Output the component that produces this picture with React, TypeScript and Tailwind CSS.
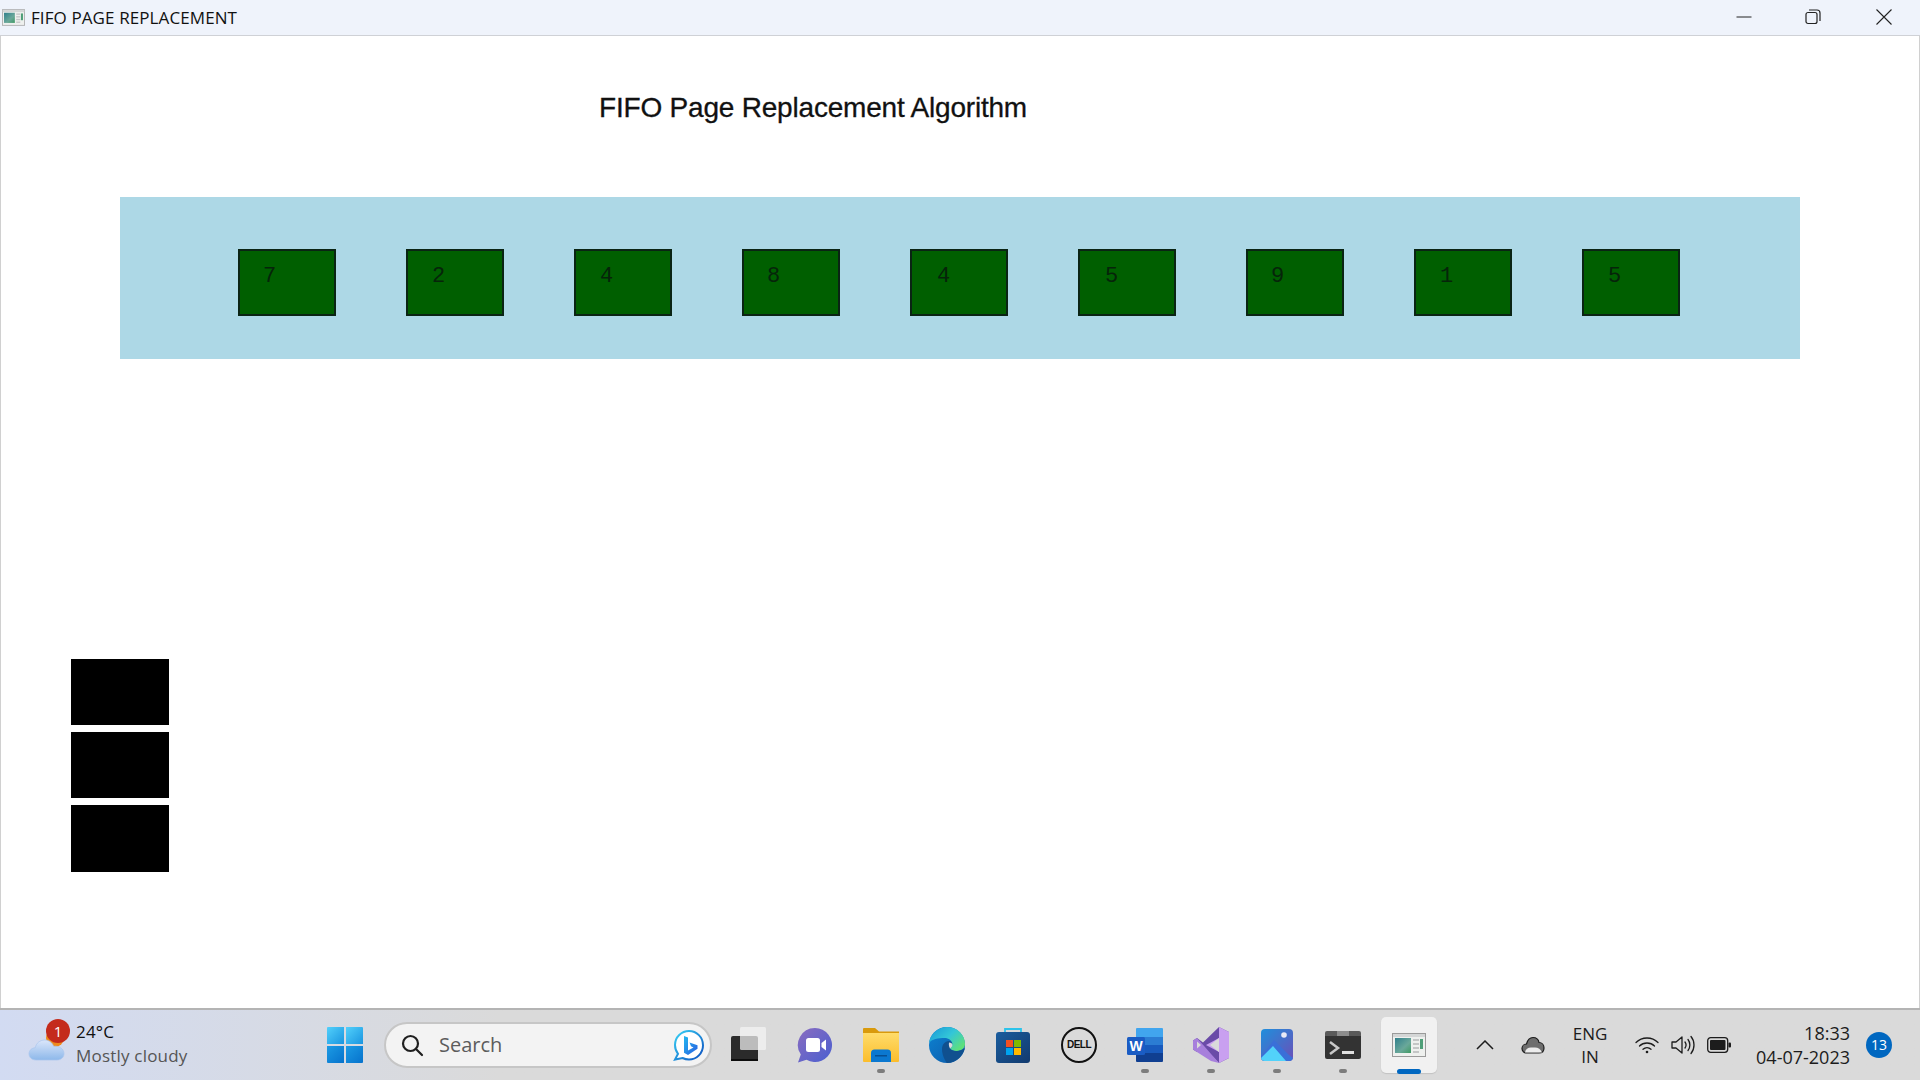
const pages = [
  { value: "7", pad: "pl-[23px]" },
  { value: "2", pad: "pl-[24px]" },
  { value: "4", pad: "pl-[24px]" },
  { value: "8", pad: "pl-[23px]" },
  { value: "4", pad: "pl-[25px]" },
  { value: "5", pad: "pl-[25px]" },
  { value: "9", pad: "pl-[23px]" },
  { value: "1", pad: "pl-[24px]" },
  { value: "5", pad: "pl-[24px]" },
];

function AppIcon({ className }: { className?: string }) {
  return (
    <svg viewBox="0 0 34 24" className={className}>
      <rect x="0.5" y="0.5" width="33" height="23" fill="#eef0ee" stroke="#9a9a9a" />
      <rect x="1" y="1" width="32" height="3" fill="#d4d6d6" />
      <defs>
        <linearGradient id="appFill" x1="0" y1="0" x2="1" y2="1">
          <stop offset="0" stopColor="#2f7f8c" />
          <stop offset="0.6" stopColor="#6aa89a" />
          <stop offset="1" stopColor="#3f9a63" />
        </linearGradient>
      </defs>
      <rect x="3" y="5" width="16" height="15" fill="url(#appFill)" />
      <rect x="21" y="6" width="6" height="2" fill="#c4c6c6" />
      <rect x="21" y="10" width="6" height="2" fill="#c4c6c6" />
      <rect x="21" y="14" width="6" height="2" fill="#c4c6c6" />
      <rect x="21" y="18" width="6" height="2" fill="#c4c6c6" />
      <rect x="28" y="6" width="3" height="10" fill="#4f9f78" />
    </svg>
  );
}

function WeatherIcon() {
  return (
    <svg viewBox="0 0 38 36" className="h-[36px] w-[38px]">
      <defs>
        <linearGradient id="cloudFill" x1="0" y1="0" x2="0" y2="1">
          <stop offset="0" stopColor="#dbe6fa" />
          <stop offset="1" stopColor="#8db8ea" />
        </linearGradient>
      </defs>
      <circle cx="27" cy="11" r="9" fill="#ee8a1c" />
      <path
        d="M8 33c-4 0-7-2.600-7-6.200 0-3.400 2.800-6 6.300-6 .6-4.400 4.700-7.800 9.300-7.800 4.300 0 7.800 2.600 9 6.300 5.200-.6 10.400 2.200 10.400 7.400 0 3.800-3.200 6.300-7 6.300z"
        fill="url(#cloudFill)"
        stroke="#a9c6ee"
        strokeWidth="0.7"
      />
    </svg>
  );
}

function WinLogo() {
  return (
    <svg viewBox="0 0 36 36" className="h-[36px] w-[36px]">
      <defs>
        <linearGradient id="winA" x1="0" y1="0" x2="1" y2="1">
          <stop offset="0" stopColor="#52d0fb" />
          <stop offset="1" stopColor="#1a95e0" />
        </linearGradient>
        <linearGradient id="winB" x1="0" y1="0" x2="1" y2="1">
          <stop offset="0" stopColor="#1c9be4" />
          <stop offset="1" stopColor="#0672cc" />
        </linearGradient>
      </defs>
      <path d="M1 0h16v17H0V1a1 1 0 0 1 1-1z" fill="url(#winA)" />
      <path d="M19 0h16a1 1 0 0 1 1 1v16H19z" fill="url(#winA)" />
      <path d="M0 19h17v17H1a1 1 0 0 1-1-1z" fill="url(#winB)" />
      <path d="M19 19h17v16a1 1 0 0 1-1 1H19z" fill="url(#winB)" />
    </svg>
  );
}

function SearchGlass() {
  return (
    <svg viewBox="0 0 24 24" className="h-[24px] w-[24px]" fill="none" stroke="#1f1f1f" strokeWidth="2.200" strokeLinecap="round">
      <circle cx="10.500" cy="10.500" r="7.500" />
      <path d="M16 16l6 6" />
    </svg>
  );
}

function BingIcon() {
  return (
    <svg viewBox="0 0 32 32" className="h-[32px] w-[32px]">
      <defs>
        <linearGradient id="bingRing" x1="0" y1="0" x2="1" y2="1">
          <stop offset="0" stopColor="#38d2f5" />
          <stop offset="1" stopColor="#0c4fc0" />
        </linearGradient>
        <linearGradient id="bingB" x1="0" y1="0" x2="1" y2="1">
          <stop offset="0" stopColor="#22b8f0" />
          <stop offset="1" stopColor="#2a5fe0" />
        </linearGradient>
      </defs>
      <path
        d="M17 2C9.500 2 3 8 3 16c0 3.500 1.200 6.500 3 8.800L3 30.500l7.500-1.500c2 1 4.200 1.500 6.500 1.500 7.700 0 14-6.300 14-14.300S24.700 2 17 2z"
        fill="#fff"
        stroke="url(#bingRing)"
        strokeWidth="2"
      />
      <path d="M12 7l4 1.500v13l5.500-3-2.500-1.200-1.500-3.800 8 2.800v3.400L16 26l-4-2.200z" fill="url(#bingB)" />
    </svg>
  );
}

function TaskViewIcon() {
  return (
    <svg viewBox="0 0 36 36" className="h-[36px] w-[36px] overflow-visible">
      <rect x="4" y="9" width="27" height="25" rx="2" fill="#2b2b2b" />
      <rect x="4" y="32" width="27" height="2" fill="#0d0d0d" />
      <rect x="13" y="0" width="26" height="23" rx="1.500" fill="#f4f4f4" fillOpacity="0.72" />
    </svg>
  );
}

function ChatIcon() {
  return (
    <svg viewBox="0 0 36 36" className="h-[36px] w-[36px]">
      <defs>
        <linearGradient id="chatFill" x1="0" y1="0" x2="1" y2="1">
          <stop offset="0" stopColor="#8a6cc0" />
          <stop offset="1" stopColor="#4a5fd0" />
        </linearGradient>
      </defs>
      <path d="M18 1a17 17 0 1 1-8.500 31.700L1 35.500l2.800-8A17 17 0 0 1 18 1z" fill="url(#chatFill)" />
      <rect x="9" y="11" width="14" height="14" rx="2.500" fill="#fff" />
      <path d="M24.500 16l4.500-3.500v11L24.500 20z" fill="#fff" />
    </svg>
  );
}

function FolderIcon() {
  return (
    <svg viewBox="0 0 36 34" className="h-[34px] w-[36px]">
      <defs>
        <linearGradient id="folderFill" x1="0" y1="0" x2="0" y2="1">
          <stop offset="0" stopColor="#ffdc6a" />
          <stop offset="1" stopColor="#fbbd2c" />
        </linearGradient>
      </defs>
      <path d="M1 0h11l4 3.500h20V8H0V1a1 1 0 0 1 1-1z" fill="#d99a0c" />
      <path d="M0 5h36v28a1 1 0 0 1-1 1H1a1 1 0 0 1-1-1z" fill="url(#folderFill)" />
      <path d="M8 34v-9a3.500 3.500 0 0 1 3.500-3.500h13A3.500 3.500 0 0 1 28 25v9z" fill="#0b78d0" />
      <rect x="12" y="27" width="12" height="1.500" fill="#064f94" />
    </svg>
  );
}

function EdgeIcon() {
  return (
    <svg viewBox="0 0 36 36" className="h-[36px] w-[36px]">
      <defs>
        <linearGradient id="edgeTop" x1="0" y1="0" x2="1" y2="0.7">
          <stop offset="0" stopColor="#1796d8" />
          <stop offset="0.55" stopColor="#33c6d8" />
          <stop offset="1" stopColor="#5fe07a" />
        </linearGradient>
        <linearGradient id="edgeLow" x1="0" y1="0" x2="1" y2="1">
          <stop offset="0" stopColor="#0c84d4" />
          <stop offset="1" stopColor="#0d58a6" />
        </linearGradient>
      </defs>
      <circle cx="18" cy="18" r="18" fill="url(#edgeLow)" />
      <path d="M0 16C1 7 9 0 18 0c10 0 18 7.500 18 17 0 4.500-4 7-8.500 7-3 0-5.500-1-6.500-2.500 1.500-1 2.500-2.200 2.500-4 0-3.800-4-6.500-8-6.500-6 0-13 1-15.500 5z" fill="url(#edgeTop)" />
      <path d="M13 22c0-4.500 3-7.500 7-8 2.500 0 3 1.500 3 3.500 0 1-1 2.500-2 4 1.500 2 4 2.500 6.500 2.500 3 0 6-1.200 8.500-3-2 8-9 15-18 15 0 0-5-6-5-14z" fill="#10508f" />
      <path d="M20 15.500c2 0 3.500 1 3.500 2.500 0 1.200-1 2.500-2.500 3.500-.8-1.500-1.500-3.500-1-6z" fill="#dadada" />
    </svg>
  );
}

function StoreIcon() {
  return (
    <svg viewBox="0 0 36 36" className="h-[36px] w-[36px]">
      <defs>
        <linearGradient id="storeFill" x1="0" y1="0" x2="1" y2="1">
          <stop offset="0" stopColor="#1a5d9e" />
          <stop offset="1" stopColor="#123a6e" />
        </linearGradient>
      </defs>
      <path d="M10 6V2h16v4" fill="none" stroke="#2cc3ea" strokeWidth="1.800" />
      <rect x="1" y="5" width="34" height="31" rx="3" fill="url(#storeFill)" />
      <rect x="11" y="13" width="7" height="7" fill="#f25022" />
      <rect x="19" y="13" width="7" height="7" fill="#7fba00" />
      <rect x="11" y="21" width="7" height="7" fill="#00a4ef" />
      <rect x="19" y="21" width="7" height="7" fill="#ffb900" />
    </svg>
  );
}

function DellIcon() {
  return (
    <div className="flex h-[36px] w-[36px] items-center justify-center rounded-full border-[2px] border-[#111111]">
      <span className="font-['Liberation_Sans',sans-serif] text-[10px] font-bold leading-none tracking-[-0.5px] text-[#111111]">DELL</span>
    </div>
  );
}

function WordIcon() {
  return (
    <svg viewBox="0 0 36 34" className="h-[34px] w-[36px]">
      <path d="M9 1a1 1 0 0 1 1-1h25a1 1 0 0 1 1 1v8H9z" fill="#41a5ee" />
      <rect x="9" y="9" width="27" height="8" fill="#2b7cd3" />
      <rect x="9" y="17" width="27" height="8" fill="#185abd" />
      <path d="M9 25h27v8a1 1 0 0 1-1 1H10a1 1 0 0 1-1-1z" fill="#103f91" />
      <rect x="0" y="9" width="18" height="18" rx="1.500" fill="#1a5cc4" />
      <text x="9" y="23" textAnchor="middle" fontSize="14" fontWeight="700" fill="#fff" fontFamily="Liberation Sans, sans-serif">W</text>
    </svg>
  );
}

function VsIcon() {
  return (
    <svg viewBox="0 0 36 36" className="h-[36px] w-[36px]">
      <path d="M26 0l10 5v26l-10 5-16-15.500L4 25l-4-2.500v-9L4 11l6 4.500z" fill="#6a4ba8" />
      <path d="M26 0l10 5v26l-10 5V25L13 18 26 11z" fill="#c9a0f0" />
      <path d="M0 13.500L4 11l22 25-8-2L0 22.500z" fill="#a77fdc" />
      <path d="M4 14.500v7l4-3.500z" fill="#dadada" />
      <path d="M26 11v14l-9-7z" fill="#dadada" />
    </svg>
  );
}

function PhotosIcon() {
  return (
    <svg viewBox="0 0 32 32" className="h-[32px] w-[32px]">
      <defs>
        <linearGradient id="photosFill" x1="0" y1="0" x2="1" y2="1">
          <stop offset="0" stopColor="#1f8fdc" />
          <stop offset="1" stopColor="#6b4fb8" />
        </linearGradient>
      </defs>
      <rect width="32" height="32" rx="4" fill="url(#photosFill)" />
      <circle cx="23" cy="6" r="2.800" fill="#e8eaf6" />
      <path d="M0 28L13 11l15 15 4 3v-1a4 4 0 0 1-4 4H4a4 4 0 0 1-4-4z" fill="#3a6fd8" />
      <path d="M0 29L12 17l13 15H4a4 4 0 0 1-4-3z" fill="#52d2fa" />
    </svg>
  );
}

function TerminalIcon() {
  return (
    <svg viewBox="0 0 36 28" className="h-[28px] w-[36px]">
      <path d="M2 0h10v6H0V2a2 2 0 0 1 2-2z" fill="#5a5a5a" />
      <rect x="12" y="0" width="12" height="6" fill="#8d8d8d" />
      <path d="M24 0h10a2 2 0 0 1 2 2v4H24z" fill="#5a5a5a" />
      <path d="M0 5h36v21a2 2 0 0 1-2 2H2a2 2 0 0 1-2-2z" fill="#333333" />
      <path d="M5 11l8 6-8 6" fill="none" stroke="#c8c8c8" strokeWidth="2.500" />
      <rect x="17" y="20" width="12" height="3" fill="#e0e0e0" />
    </svg>
  );
}

function TrayOneDrive() {
  return (
    <svg viewBox="0 0 24 18" className="h-[18px] w-[24px]">
      <path d="M6 17c-3 0-5-2-5-4.500S3 8 5.500 8C6.500 4 9 1.500 12 1.500c3 0 5.500 2 6 5 3 0 5 2.500 5 5.500s-2 5-5 5z" fill="#6e6e6e" stroke="#1c1c1c" strokeWidth="1.200" />
      <path d="M4 16.400c.5-3 3-4.900 6-4.900h4c3 0 6 2 7 4.900z" fill="#ececec" />
    </svg>
  );
}

function TrayWifi() {
  return (
    <svg viewBox="0 0 24 18" className="h-[18px] w-[24px]" fill="none" stroke="#1c1c1c" strokeWidth="1.300" strokeLinecap="round">
      <path d="M1 6.500c6-6 16-6 22 0" />
      <path d="M4.500 10c4-4 11-4 15 0" />
      <path d="M8 13.200c2.300-2 5.700-2 8 0" />
      <circle cx="12" cy="16" r="1.300" fill="#1c1c1c" stroke="none" />
    </svg>
  );
}

function TraySound() {
  return (
    <svg viewBox="0 0 24 20" className="h-[20px] w-[24px]" fill="none" stroke="#1c1c1c" strokeWidth="1.300" strokeLinecap="round" strokeLinejoin="round">
      <path d="M1 7v6h4l6 5V2L5 7z" />
      <path d="M14 7c1.300 1.800 1.300 4.200 0 6" />
      <path d="M17 4.500c2.500 3.200 2.500 7.800 0 11" />
      <path d="M20 1.500c4 4.800 4 12.200 0 17" />
    </svg>
  );
}

function TrayBattery() {
  return (
    <svg viewBox="0 0 24 16" className="h-[16px] w-[24px]">
      <rect x="0.700" y="0.700" width="20" height="14.600" rx="3" fill="none" stroke="#1c1c1c" strokeWidth="1.300" />
      <rect x="3" y="3" width="15.500" height="10" rx="1" fill="#1c1c1c" />
      <rect x="21.500" y="5.500" width="2.500" height="5" rx="1" fill="#1c1c1c" />
    </svg>
  );
}

function Slot({ children, dot, className = "" }: { children: React.ReactNode; dot?: boolean; className?: string }) {
  return (
    <div className={`relative flex h-[56px] w-[66px] shrink-0 items-center justify-center ${className}`}>
      {children}
      {dot && <div className="absolute bottom-0 left-1/2 h-[4px] w-[8px] -translate-x-1/2 rounded-full bg-[#7d7d7d]" />}
    </div>
  );
}

export default function App() {
  return (
    <div className="flex h-[1080px] w-[1920px] flex-col overflow-hidden bg-white font-['Open_Sans',sans-serif]">
      {/* title bar */}
      <div className="flex h-[36px] shrink-0 items-center border-b border-[#cfd1d6] bg-[#eff3fb] pl-[2px]">
        <AppIcon className="h-[17px] w-[23px]" />
        <span className="ml-[6px] text-[17px] leading-none tracking-[0.1px] text-[#111111]">FIFO PAGE REPLACEMENT</span>
        <div className="mb-[2px] ml-auto flex items-center">
          <svg viewBox="0 0 16 16" className="mr-[53px] h-[16px] w-[16px]" fill="none" stroke="#222222" strokeWidth="1"><path d="M0.500 8h15" /></svg>
          <svg viewBox="0 0 16 16" className="mr-[55px] h-[16px] w-[16px]" fill="none" stroke="#222222" strokeWidth="1.200">
            <rect x="1" y="3.500" width="11" height="11" rx="2" />
            <path d="M4 1h8a3 3 0 0 1 3 3v8" />
          </svg>
          <svg viewBox="0 0 16 16" className="mr-[28px] h-[16px] w-[16px]" fill="none" stroke="#222222" strokeWidth="1.100"><path d="M0.500 0.500l15 15M15.500 0.500l-15 15" /></svg>
        </div>
      </div>

      {/* window body */}
      <main className="flex min-h-0 flex-1 flex-col border-x border-[#d0d0d0] bg-white">
        <h1 className="ml-[598px] mt-[55px] font-['Liberation_Sans',sans-serif] text-[28px] font-normal leading-[34px] tracking-[-0.2px] text-[#111111] [-webkit-text-stroke:0.3px_#111111]">
          FIFO Page Replacement Algorithm
        </h1>
        <div className="ml-[119px] mt-[72px] flex h-[162px] w-[1680px] items-start gap-[70px] bg-[#add8e6] pl-[118px] pt-[52px]">
          {pages.map((p, i) => (
            <div key={i} className={`h-[67px] w-[98px] border-[2px] border-[#0a2414] bg-[#005f00] pt-[13px] font-['Liberation_Mono',monospace] text-[22px] leading-[26px] text-[#06240a] ${p.pad}`}>
              {p.value}
            </div>
          ))}
        </div>
        <div className="ml-[70px] mt-[300px] flex w-[98px] flex-col gap-[7px]">
          <div className="h-[66px] bg-black" />
          <div className="h-[66px] bg-black" />
          <div className="h-[67px] bg-black" />
        </div>
      </main>

      {/* taskbar */}
      <footer className="flex h-[72px] shrink-0 items-center border-t-[2px] border-[#b4b4b4] bg-[#dadada] bg-linear-to-r from-[#d2dbf2] to-[#dadada] to-[26%]">
        <div className="relative ml-[28px] flex w-[284px] shrink-0 items-center">
          <WeatherIcon />
          <div className="absolute left-[18px] top-[-3px] flex h-[24px] w-[24px] items-center justify-center rounded-full bg-[#c42b1c] text-[15px] leading-none text-white">1</div>
          <div className="mt-[-2px] ml-[10px] text-[17px] leading-[24px] tracking-[0.2px]">
            <div className="text-[#111111]">24°C</div>
            <div className="text-[#555555]">Mostly cloudy</div>
          </div>
        </div>
        <Slot><WinLogo /></Slot>
        <div className="ml-[6px] flex h-[46px] w-[328px] shrink-0 items-center rounded-full border-[2px] border-[#c6c6c6] bg-[#f3f3f3] pl-[14px] pr-[6px]">
          <SearchGlass />
          <span className="ml-[15px] text-[20px] text-[#5c5c5c]">Search</span>
          <div className="ml-auto"><BingIcon /></div>
        </div>
        <Slot><TaskViewIcon /></Slot>
        <Slot className="ml-[4px]"><ChatIcon /></Slot>
        <Slot dot><FolderIcon /></Slot>
        <Slot><EdgeIcon /></Slot>
        <Slot><StoreIcon /></Slot>
        <Slot><DellIcon /></Slot>
        <Slot dot><WordIcon /></Slot>
        <Slot dot><VsIcon /></Slot>
        <Slot dot><PhotosIcon /></Slot>
        <Slot dot><TerminalIcon /></Slot>
        <Slot>
          <div className="flex h-[56px] w-[56px] items-center justify-center rounded-[5px] bg-[#f1f1f1] shadow-[0_1px_1px_#c2c2c2]">
            <AppIcon className="h-[28px] w-[34px]" />
          </div>
          <div className="absolute bottom-[-1px] left-1/2 h-[5px] w-[24px] -translate-x-1/2 rounded-full bg-[#0067c0]" />
        </Slot>

        {/* system tray */}
        <svg viewBox="0 0 18 10" className="ml-[34px] h-[10px] w-[18px] shrink-0" fill="none" stroke="#1c1c1c" strokeWidth="1.500"><path d="M1 9l8-8 8 8" /></svg>
        <div className="ml-[27px] shrink-0"><TrayOneDrive /></div>
        <div className="ml-[25px] w-[40px] shrink-0 text-center text-[17px] leading-[23px] text-[#1c1c1c]">
          <div>ENG</div>
          <div>IN</div>
        </div>
        <div className="ml-[25px] shrink-0"><TrayWifi /></div>
        <div className="ml-[12px] shrink-0"><TraySound /></div>
        <div className="ml-[12px] shrink-0"><TrayBattery /></div>
        <div className="ml-[21px] w-[98px] shrink-0 text-right text-[18px] leading-[24px] text-[#1c1c1c]">
          <div>18:33</div>
          <div>04-07-2023</div>
        </div>
        <div className="ml-[16px] flex h-[26px] w-[26px] shrink-0 items-center justify-center rounded-full bg-[#0067c0] text-[14px] leading-none text-white">13</div>
      </footer>
    </div>
  );
}
